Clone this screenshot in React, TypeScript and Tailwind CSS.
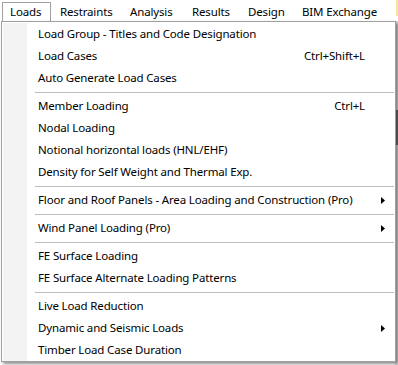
import React from 'react';

type Item = { label: string; shortcut?: string; sub?: boolean } | 'sep';

const menuBar = [
  { label: 'Loads', w: 'w-[49px]', active: true },
  { label: 'Restraints', w: 'w-[70px]' },
  { label: 'Analysis', w: 'w-[62px]' },
  { label: 'Results', w: 'w-[56px]' },
  { label: 'Design', w: 'w-[54px]' },
  { label: 'BIM Exchange', w: 'w-[94px]' },
];

const items: Item[] = [
  { label: 'Load Group - Titles and Code Designation' },
  { label: 'Load Cases', shortcut: 'Ctrl+Shift+L' },
  { label: 'Auto Generate Load Cases' },
  'sep',
  { label: 'Member Loading', shortcut: 'Ctrl+L' },
  { label: 'Nodal Loading' },
  { label: 'Notional horizontal loads (HNL/EHF)' },
  { label: 'Density for Self Weight and Thermal Exp.' },
  'sep',
  { label: 'Floor and Roof Panels - Area Loading and Construction (Pro)', sub: true },
  'sep',
  { label: 'Wind Panel Loading (Pro)', sub: true },
  'sep',
  { label: 'FE Surface Loading' },
  { label: 'FE Surface Alternate Loading Patterns' },
  'sep',
  { label: 'Live Load Reduction' },
  { label: 'Dynamic and Seismic Loads', sub: true },
  { label: 'Timber Load Case Duration' },
];

function Arrow() {
  return (
    <svg width="4" height="7" viewBox="0 0 4 7" className="block">
      <polygon points="0,0 4,3.5 0,7" fill="#000" />
    </svg>
  );
}

export default function App() {
  return (
    <div className="relative w-[398px] h-[365px] overflow-hidden bg-white text-[11.5px] tracking-[-0.15px] text-black font-['Segoe_UI','Noto_Sans',sans-serif]">
      {/* menu bar */}
      <div className="flex h-[21px] pl-[2px] pt-[2px] bg-white">
        {menuBar.map((m) => (
          <div
            key={m.label}
            className={`${m.w} h-[19px] flex items-center leading-none whitespace-nowrap ${
              m.active ? 'border border-b-0 border-[#a0a0a0] pl-[7px]' : 'pl-[9px]'
            }`}
          >
            {m.label}
          </div>
        ))}
        <div className="ml-auto w-[2px] h-[16px] -mt-[2px] bg-[#f6e7a0]" />
      </div>

      {/* app background peeking at the right */}
      <div className="absolute right-0 top-[21px] bottom-0 w-[3px] bg-[#dcdcdc]">
        <div className="mt-[89px] h-[35px] bg-[#707070]" />
      </div>

      {/* dropdown */}
      <div className="absolute left-[1px] top-[21px] w-[395px] border border-[#a0a0a0] bg-white shadow-[2px_2px_3px_rgba(0,0,0,0.45)] pt-[1px]">
        <div className="relative flex flex-col pl-[1px]">
          <div className="absolute left-[1px] top-0 bottom-0 w-[24px] bg-[#f3f3f3]" />
          {items.map((it, i) =>
            it === 'sep' ? (
              <div key={i} className="relative h-[6px] flex items-center pl-[32px] pr-[1px]">
                <div className="h-px w-full bg-[#bdbdbd]" />
              </div>
            ) : (
              <div key={i} className="relative h-[22px] flex items-center pl-[35px] whitespace-nowrap">
                <span className="flex-1 min-w-0">{it.label}</span>
                {it.shortcut && <span>{it.shortcut}</span>}
                <span className="w-[30px] shrink-0 flex pl-[16px]">{it.sub && <Arrow />}</span>
              </div>
            )
          )}
        </div>
      </div>
    </div>
  );
}
